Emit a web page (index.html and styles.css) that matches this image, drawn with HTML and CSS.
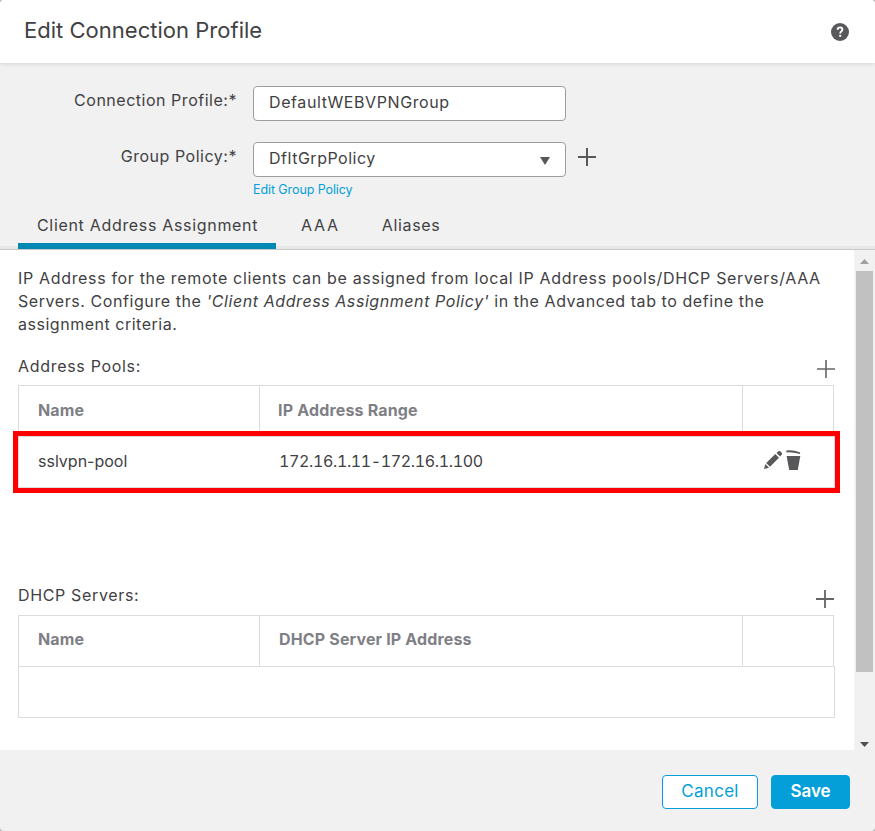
FILE: index.html
```
<!DOCTYPE html>
<html lang="en">
<head>
<meta charset="utf-8">
<title>Edit Connection Profile</title>
<link rel="stylesheet" href="styles.css">
</head>
<body>
<div class="dialog">
  <header class="header">
    <h1 class="title">Edit Connection Profile</h1>
    <svg class="help" viewBox="0 0 18 18"><circle cx="9" cy="9" r="9" fill="#58585b"/><path d="M6.6 6.8Q6.7 4.4 9.1 4.4Q11.4 4.5 11.4 6.5Q11.3 7.7 10.2 8.5Q9.2 9.2 9.2 10.6" fill="none" stroke="#fff" stroke-width="1.9"/><rect x="8.2" y="11.8" width="2" height="2" fill="#fff"/></svg>
  </header>

  <form class="form">
    <label class="label">Connection Profile:*</label>
    <div class="field t-webvpn">DefaultWEBVPNGroup</div>
    <span></span>
    <label class="label">Group Policy:*</label>
    <div class="field select"><span>DfltGrpPolicy</span><svg class="caret" viewBox="0 0 10 8"><path d="M0 0H10L5 8Z" fill="#58585b"/></svg></div>
    <svg class="plus plus-group" viewBox="0 0 18 18"><path d="M9 0V18M0 9H18" stroke="#58585b" stroke-width="2"/></svg>
    <a class="edit-link">Edit Group Policy</a>
  </form>

  <nav class="tabs">
    <a class="tab active">Client Address Assignment</a>
    <a class="tab tab-aaa">AAA</a>
    <a class="tab tab-aliases">Aliases</a>
  </nav>

  <div class="body">
    <main class="content">
      <p class="intro"><span class="t-line1">IP Address for the remote clients can be assigned from local IP Address pools/DHCP Servers/AAA</span><br><span class="t-line2">Servers. Configure the <em>'Client Address Assignment Policy'</em> in the Advanced tab to define the</span><br>assignment criteria.</p>

      <section class="section">
        <div class="section-head"><span>Address Pools:</span><svg class="plus" viewBox="0 0 18 18"><path d="M9 0V18M0 9H18" stroke="#656568" stroke-width="1.6"/></svg></div>
        <div class="row head"><div class="cell">Name</div><div class="cell">IP Address Range</div><div class="cell"></div></div>
        <div class="highlight">
          <div class="row data">
            <div class="cell t-ssl">sslvpn-pool</div>
            <div class="cell t-ip">172.16.1.11-172.16.1.100</div>
            <div class="cell actions">
              <svg class="pencil" viewBox="0 0 18 18"><path d="M0 18L1.4 13.1L5 16.7ZM2.2 12L11.3 3L15 6.7L6 15.8ZM12.5 2L14.4 .3Q15.5-.5 16.8 .8L17.5 1.5Q18.6 2.8 17.6 3.8L16.1 5.6Z" fill="#58585b"/></svg>
              <svg class="trash" viewBox="0 0 15 20"><path d="M.3 .6Q7-.4 14.2 2.6L14 4.1Q7 2 .5 2.4Z" fill="#58585b"/><path d="M.6 6.1H14.3L11.8 20H3.2Z" fill="#58585b"/></svg>
            </div>
          </div>
        </div>
      </section>

      <section class="section dhcp">
        <div class="section-head"><span>DHCP Servers:</span><svg class="plus" viewBox="0 0 18 18"><path d="M9 0V18M0 9H18" stroke="#656568" stroke-width="1.8"/></svg></div>
        <div class="row head closed"><div class="cell">Name</div><div class="cell t-server">DHCP Server IP Address</div><div class="cell"></div></div>
        <div class="empty"></div>
      </section>
    </main>
    <div class="scrollbar">
      <svg class="arrow" viewBox="0 0 9 5"><path d="M0 5L4.5 0L9 5Z" fill="#a0a0a0"/></svg>
      <div class="thumb"></div>
      <svg class="arrow" viewBox="0 0 9 5"><path d="M0 0L4.5 5L9 0Z" fill="#505050"/></svg>
    </div>
  </div>

  <footer class="footer">
    <button class="btn cancel">Cancel</button>
    <button class="btn save">Save</button>
  </footer>
</div>
</body>
</html>
```

FILE: styles.css
```
* { box-sizing: border-box; }
body {
  margin: 0;
  background: #b5b5b5;
  color: #414143;
  font: 16px/23px Inter, "Liberation Sans", sans-serif;
  letter-spacing: 0.52px;
}
svg { display: block; flex: none; }
.dialog {
  display: flex;
  flex-direction: column;
  width: 875px;
  height: 831px;
  background: #f1f1f1;
  border-radius: 4px;
  overflow: hidden;
}
.header {
  display: flex;
  justify-content: space-between;
  height: 63px;
  padding: 16px 26px 0 24px;
  background: #fff;
  box-shadow: 0 1px 4px rgba(0, 0, 0, .12);
}
.title { margin: 0; font-size: 22px; line-height: 28px; font-weight: 400; letter-spacing: 0.02px; }
.help { width: 18px; height: 18px; margin-top: 7px; }
.form {
  display: grid;
  grid-template-columns: 237px 313px 1fr;
  grid-template-rows: 35px 35px 20px;
  column-gap: 16px;
  row-gap: 21px;
  height: 139px;
  padding-top: 23px;
}
.label { text-align: right; line-height: 28px; white-space: nowrap; }
.field {
  padding-left: 15px;
  border: 1px solid #9e9ea2;
  border-radius: 4px;
  background: #fff;
  line-height: 31px;
}
.t-webvpn { letter-spacing: 0.6px; }
.select { display: flex; justify-content: space-between; align-items: center; padding-right: 15px; }
.select span { align-self: flex-start; }
.caret { width: 10px; height: 8px; margin-top: 2px; }
.plus { width: 18px; height: 18px; }
.plus-group { margin: 6px 0 0 -4px; }
.edit-link { grid-column: 2; margin-top: -17px; color: #049fd9; font-size: 12.5px; line-height: 18px; letter-spacing: -0.09px; }
.tabs {
  display: flex;
  height: 48px;
  padding-left: 18px;
  border-bottom: 1px solid #c8c8c8;
  background: linear-gradient(#f1f1f1 44px, #e7e7e7 44px);
  line-height: 46px;
  letter-spacing: 0.68px;
}
.tab { height: 47px; }
.active { width: 258px; padding-left: 19px; border-bottom: 6px solid #0388b4; }
.tab-aaa { margin-left: 25px; letter-spacing: 1.7px; }
.tab-aliases { margin-left: 42px; }
.body { display: flex; height: 500px; background: #fff; }
.content { flex: 1; min-width: 0; padding: 17px 19px 0 18px; }
.intro { margin: 0; height: 69px; white-space: nowrap; }
.t-line1 { letter-spacing: 0.665px; }
.t-line2 { letter-spacing: 0.57px; }
.section { padding-top: 19px; }
.section-head { display: flex; justify-content: space-between; height: 30px; letter-spacing: 0.69px; }
.section-head .plus { margin-top: 5px; }
.row { display: grid; grid-template-columns: 242px 483px 91px; }
.head {
  grid-template-columns: 240px 483px 91px;
  width: 816px;
  height: 46px;
  border: 1px solid #dcdcdf;
  border-bottom: 0;
  font-weight: 700;
  color: #7f7f86;
  letter-spacing: 0.17px;
}
.closed { height: 51px; }
.cell { padding: 13px 0 0 19px; }
.head .cell + .cell { border-left: 1px solid #dcdcdf; padding-left: 18px; }
.highlight { width: 827px; height: 62px; margin-left: -5px; border: 5px solid #f00; }
.data { height: 52px; width: 817px; border: 1px solid #dcdcdf; }
.t-ssl { letter-spacing: 0; }
.t-ip { padding-left: 18px; font-variant-numeric: tabular-nums; letter-spacing: -0.37px; }
.head .t-server.cell { padding-left: 19px; letter-spacing: 0.15px; }
.actions { display: flex; gap: 4px; padding: 13px 0 0 20px; }
.pencil { width: 18px; height: 18px; margin-top: 1px; }
.trash { width: 15px; height: 20px; }
.dhcp { padding-top: 91px; }
.dhcp .section-head { height: 31px; letter-spacing: 0.65px; }
.dhcp .plus { margin: 6px 1px 0 0; }
.dhcp .cell { padding-top: 12px; }
.empty { height: 52px; width: 817px; border: 1px solid #dcdcdf; }
.scrollbar {
  display: flex;
  flex-direction: column;
  flex: none;
  width: 21px;
  padding: 9px 2px 3px;
  background: #f1f1f1;
  align-items: center;
}
.arrow { width: 9px; height: 5px; }
.thumb { width: 17px; height: 401px; margin: 7px 0 70px; background: #c1c1c1; }
.footer { display: flex; gap: 13px; justify-content: flex-end; padding: 25px 25px 0; }
.btn {
  height: 34px;
  padding: 0 0 2px;
  border: 1px solid #049fd9;
  border-radius: 4px;
  font: 17px/20px Inter, "Liberation Sans", sans-serif;
  letter-spacing: 0.3px;
}
.cancel { width: 96px; background: #fff; color: #049fd9; }
.save { width: 79px; background: #049fd9; color: #fff; font-weight: 600; letter-spacing: -0.1px; }
```
